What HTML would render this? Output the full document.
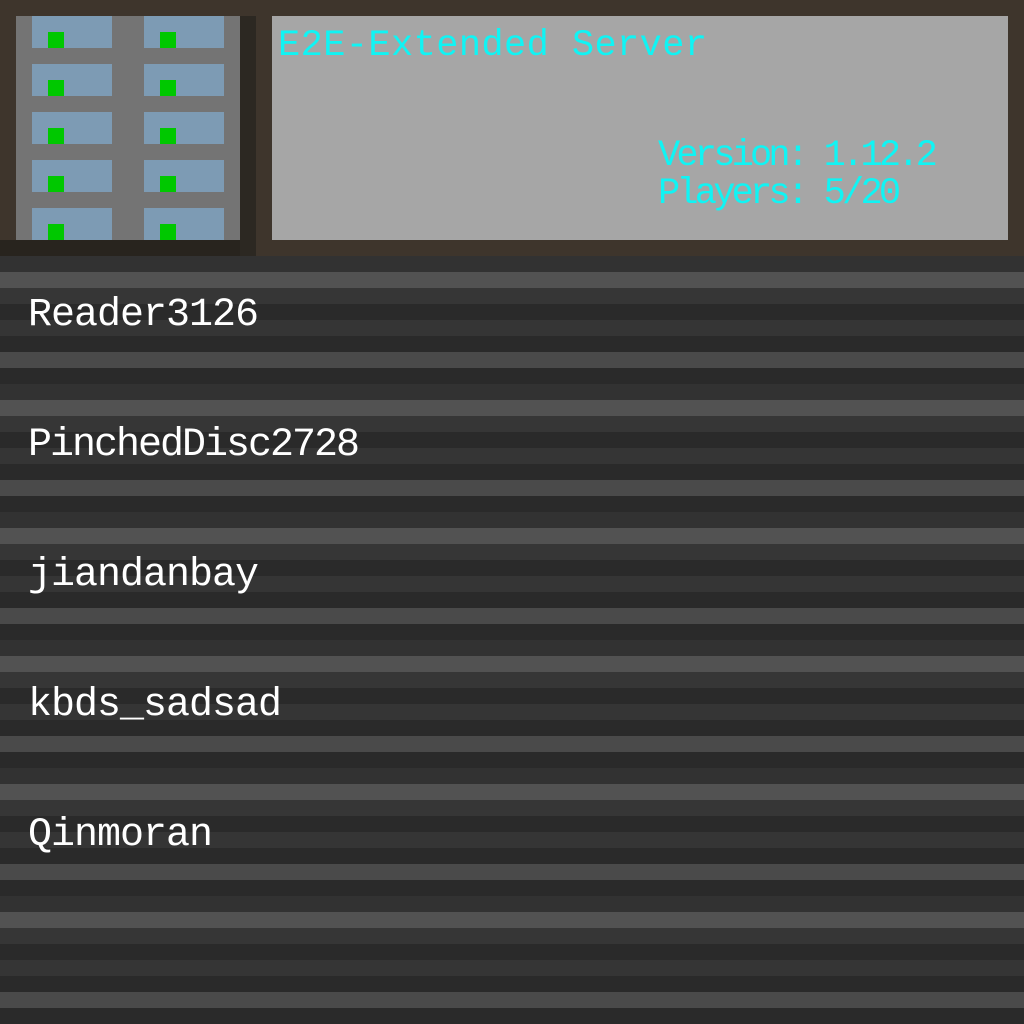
<!DOCTYPE html>
<html><head><style>
body{margin:0;width:1024px;height:1024px;overflow:hidden;background:#2c2c2c;position:relative;font-family:"Liberation Mono",monospace}
.hdr{position:absolute;left:0;top:0;width:1024px;height:256px;background:#3e352c}
.bg{position:absolute;left:0;top:256px;width:1024px;height:768px;
background:repeating-linear-gradient(to bottom,#323232 0 16px,#525252 16px 32px,#363636 32px 48px,#2a2a2a 48px 64px,#353535 64px 80px,#2a2a2a 80px 96px,#4a4a4a 96px 112px,#2a2a2a 112px 128px)}
.abs{position:absolute}
.win{position:absolute;width:80px;height:32px;background:#7d9bb4}
.g{position:absolute;width:16px;height:16px;background:#00c800;left:16px;top:16px}
.name{position:absolute;left:28px;color:#fff;font-size:40px;line-height:40px;letter-spacing:-1px}
.cy{position:absolute;color:#10f4f4;font-size:37px;line-height:37px}
</style></head><body>
<div class="hdr"></div>
<div class="abs" style="left:0;top:240px;width:256px;height:16px;background:#28241e"></div>
<div class="abs" style="left:240px;top:16px;width:16px;height:240px;background:#2c2822"></div>
<div class="abs" style="left:16px;top:16px;width:224px;height:224px;background:#747474"></div>
<div class="win" style="left:32px;top:16px"><div class="g"></div></div>
<div class="win" style="left:144px;top:16px"><div class="g"></div></div>
<div class="win" style="left:32px;top:64px"><div class="g"></div></div>
<div class="win" style="left:144px;top:64px"><div class="g"></div></div>
<div class="win" style="left:32px;top:112px"><div class="g"></div></div>
<div class="win" style="left:144px;top:112px"><div class="g"></div></div>
<div class="win" style="left:32px;top:160px"><div class="g"></div></div>
<div class="win" style="left:144px;top:160px"><div class="g"></div></div>
<div class="win" style="left:32px;top:208px"><div class="g"></div></div>
<div class="win" style="left:144px;top:208px"><div class="g"></div></div>
<div class="abs" style="left:272px;top:16px;width:736px;height:224px;background:#a6a6a6"></div>
<div class="cy" style="left:278px;top:28px;letter-spacing:0.4px">E2E-Extended Server</div>
<div class="cy" style="left:658px;top:138px;letter-spacing:-3.8px">Version: 1.12.2</div>
<div class="cy" style="left:658px;top:176px;letter-spacing:-3.8px">Players: 5/20</div>
<div class="bg"></div>
<div class="name" style="top:296px">Reader3126</div>
<div class="name" style="top:426px;letter-spacing:-2px">PinchedDisc2728</div>
<div class="name" style="top:556px">jiandanbay</div>
<div class="name" style="top:686px">kbds_sadsad</div>
<div class="name" style="top:816px">Qinmoran</div>
</body></html>
